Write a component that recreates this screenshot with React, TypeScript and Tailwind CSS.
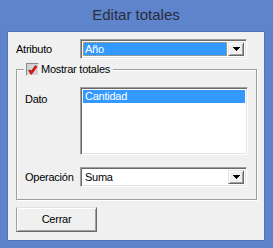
import { ReactNode } from "react";

const font = { fontFamily: '"Liberation Sans", Arial, sans-serif' };

function DropArrow() {
  return (
    <svg width="7" height="4" viewBox="0 0 7 4" shapeRendering="crispEdges">
      <polygon points="0,0 7,0 3.5,4" fill="#000" />
    </svg>
  );
}

function Combo({ children, selected }: { children: ReactNode; selected?: boolean }) {
  return (
    <div className="flex h-[20px] w-[167px] border border-t-[#a0a0a0] border-l-[#a0a0a0] border-b-white border-r-white shadow-[inset_1px_1px_0_#696969,inset_-1px_-1px_0_#e3e3e3] bg-white p-[2px]">
      <div className="flex-1 flex items-center pr-[1px]">
        {selected ? (
          <div className="h-full w-full bg-[#3399ff] outline-1 outline-dotted outline-[#e0a040] -outline-offset-1 flex items-center pl-[2px] text-white">
            {children}
          </div>
        ) : (
          <div className="pl-[2px] text-black">{children}</div>
        )}
      </div>
      <div className="w-[16px] h-full flex items-center justify-center bg-[#f0f0f0] border border-t-[#e3e3e3] border-l-[#e3e3e3] border-b-[#696969] border-r-[#696969] shadow-[inset_1px_1px_0_#fff,inset_-1px_-1px_0_#a0a0a0]">
        <DropArrow />
      </div>
    </div>
  );
}

function CheckBox() {
  return (
    <div className="w-[13px] h-[13px] bg-[#d4d4d4] border border-t-[#8a8a8a] border-l-[#8a8a8a] border-b-[#f4f4f4] border-r-[#f4f4f4]">
      <svg width="11" height="11" viewBox="0 0 11 11">
        <path d="M2.5 6 L4.5 9 L9.5 2" stroke="#1a1a1a" strokeWidth="1.3" fill="none" transform="translate(-0.8,0)" />
        <path d="M2.5 6 L4.5 9 L9.5 2" stroke="#e0141a" strokeWidth="2.2" fill="none" />
      </svg>
    </div>
  );
}

export default function App() {
  return (
    <div
      className="w-[273px] h-[248px] bg-[#5e84cb] flex flex-col pl-[7px] pr-[8px] pb-[7px] text-[11px] tracking-[-0.25px] text-black"
      style={font}
    >
      {/* TITLE */}
      <div className="h-[31px] flex items-center justify-center text-[15px] tracking-normal text-[#2a2d3c] pb-[1px]">
        Editar totales
      </div>

      {/* PANEL */}
      <div className="flex-1 bg-[#f0f0f0] border border-[#4f74bb] flex flex-col pl-[8px] pt-[7px]">
        <div className="flex items-center">
          <span className="w-[64px]">Atributo</span>
          <Combo selected>Año</Combo>
        </div>

        {/* GROUP */}
        <div className="mt-[10px] w-[241px] h-[131px] border border-[#a0a0a0] shadow-[1px_1px_0_#fff,inset_1px_1px_0_#fff] flex flex-col pl-[8px]">
          <div className="-mt-[7px] -ml-[1px] self-start flex items-center gap-[2px] bg-[#f0f0f0] pl-[2px] pr-[3px] h-[13px]">
            <CheckBox />
            <span>Mostrar totales</span>
          </div>

          <div className="flex mt-[11px]">
            <span className="w-[55px] pt-[4px]">Dato</span>
            <div className="w-[168px] h-[68px] bg-white border border-t-[#a0a0a0] border-l-[#a0a0a0] border-b-white border-r-white shadow-[inset_1px_1px_0_#696969,inset_-1px_-1px_0_#e3e3e3] p-[2px]">
              <div className="h-[13px] bg-[#3399ff] text-white flex items-center pl-[2px]">Cantidad</div>
            </div>
          </div>

          <div className="flex items-center mt-[12px]">
            <span className="w-[55px]">Operación</span>
            <Combo>Suma</Combo>
          </div>
        </div>

        {/* ACTIONS */}
        <button className="mt-[7px] w-[81px] h-[25px] bg-[#f0f0f0] border border-t-[#e3e3e3] border-l-[#a0a0a0] border-b-[#696969] border-r-[#696969] shadow-[inset_1px_1px_0_#fff,inset_-1px_-1px_0_#a0a0a0] flex items-center justify-center text-[11px]">
          Cerrar
        </button>
      </div>
    </div>
  );
}
